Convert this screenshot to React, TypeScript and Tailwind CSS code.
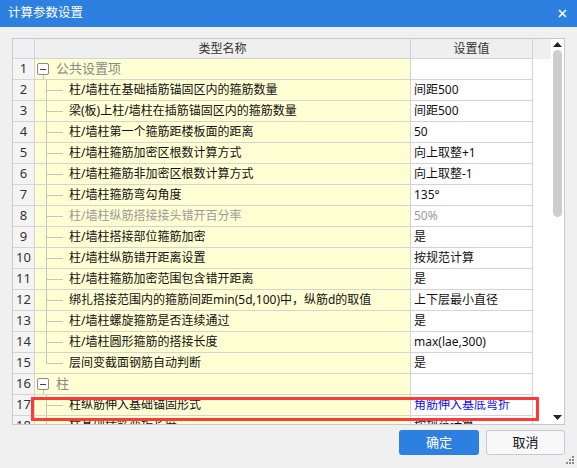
import React from "react"

type Row = {
  n: number
  name: string
  value?: string
  group?: boolean
  last?: boolean
  disabled?: boolean
  blue?: boolean
}

const rows: Row[] = [
  { n: 1, name: "公共设置项", group: true },
  { n: 2, name: "柱/墙柱在基础插筋锚固区内的箍筋数量", value: "间距500" },
  { n: 3, name: "梁(板)上柱/墙柱在插筋锚固区内的箍筋数量", value: "间距500" },
  { n: 4, name: "柱/墙柱第一个箍筋距楼板面的距离", value: "50" },
  { n: 5, name: "柱/墙柱箍筋加密区根数计算方式", value: "向上取整+1" },
  { n: 6, name: "柱/墙柱箍筋非加密区根数计算方式", value: "向上取整-1" },
  { n: 7, name: "柱/墙柱箍筋弯勾角度", value: "135°" },
  { n: 8, name: "柱/墙柱纵筋搭接接头错开百分率", value: "50%", disabled: true },
  { n: 9, name: "柱/墙柱搭接部位箍筋加密", value: "是" },
  { n: 10, name: "柱/墙柱纵筋错开距离设置", value: "按规范计算" },
  { n: 11, name: "柱/墙柱箍筋加密范围包含错开距离", value: "是" },
  { n: 12, name: "绑扎搭接范围内的箍筋间距min(5d,100)中，纵筋d的取值", value: "上下层最小直径" },
  { n: 13, name: "柱/墙柱螺旋箍筋是否连续通过", value: "是" },
  { n: 14, name: "柱/墙柱圆形箍筋的搭接长度", value: "max(lae,300)" },
  { n: 15, name: "层间变截面钢筋自动判断", value: "是", last: true },
  { n: 16, name: "柱", group: true },
  { n: 17, name: "柱纵筋伸入基础锚固形式", value: "角筋伸入基底弯折", blue: true },
  { n: 18, name: "柱基础插筋弯折长度", value: "按规范计算" },
]

const font = { fontFamily: '"Noto Sans", "Noto Sans CJK SC", sans-serif' }

function TreeLines({ last }: { last?: boolean }) {
  return (
    <svg width="32" height="20" className="shrink-0">
      <line x1="9.5" y1="0" x2="9.5" y2={last ? 10.5 : 20} stroke="#c4c4c4" />
      <line x1="9.5" y1="10.5" x2="26" y2="10.5" stroke="#c4c4c4" />
    </svg>
  )
}

function GroupBox() {
  return (
    <div className="relative h-full w-[12px] shrink-0">
      <div className="absolute top-[4px] left-0 flex h-[12px] w-[12px] items-center justify-center rounded-[2px] border border-[#8a8a8a] bg-white">
        <div className="h-[1px] w-[6px] bg-[#444]" />
      </div>
      <div className="absolute top-[16px] left-[6px] h-[4px] w-[1px] bg-[#c4c4c4]" />
    </div>
  )
}

export default function App() {
  return (
    <div className="relative flex h-[468px] w-[577px] flex-col overflow-hidden bg-[#f0f0f0]" style={font}>
      {/* title bar */}
      <div className="flex h-[27px] shrink-0 items-center justify-between bg-[#2d7fe0] pr-[10px] pl-[8px]">
        <span className="text-[12.5px] text-white">计算参数设置</span>
        <svg width="9" height="9" viewBox="0 0 9 9">
          <path d="M1 1L8 8M8 1L1 8" stroke="white" strokeWidth="1.6" />
        </svg>
      </div>

      {/* grid */}
      <div className="mt-[11px] ml-[12px] flex h-[387px] w-[553px] border border-[#c9c9c9] bg-white">
        <div className="flex w-[538px] flex-col overflow-hidden">
          {/* header */}
          <div className="flex h-[20px] shrink-0 bg-[#efefef] text-[12px] text-[#333]">
            <div className="w-[22px] shrink-0 border-r border-b border-[#d4d4d4] bg-[#eef0f3]" />
            <div className="flex w-[376px] shrink-0 items-center justify-center border-r border-b border-[#d4d4d4]">
              类型名称
            </div>
            <div className="flex w-[122px] shrink-0 items-center justify-center border-r border-b border-[#d4d4d4]">
              设置值
            </div>
            <div className="flex-1" />
          </div>
          {/* rows */}
          {rows.map((r) => (
            <div key={r.n} className="flex h-[21px] shrink-0">
              <div className="flex w-[22px] shrink-0 items-center justify-center border-r border-b border-[#d4d4d4] bg-[#f4f4f4] text-[13px] text-[#333]">
                {r.n}
              </div>
              <div className="flex w-[376px] shrink-0 items-center overflow-hidden border-r border-b border-[#d4d4d4] bg-[#ffffd4] pl-[2px] text-[12px] whitespace-nowrap">
                {r.group ? (
                  <>
                    <GroupBox />
                    <span className="ml-[7px] text-[13px] text-[#8a8a8a]">{r.name}</span>
                  </>
                ) : (
                  <>
                    <TreeLines last={r.last} />
                    <span className={r.disabled ? "text-[#9a9a9a]" : "text-[#111]"}>{r.name}</span>
                  </>
                )}
              </div>
              <div
                className={`flex w-[122px] shrink-0 items-center overflow-hidden border-r border-b border-[#d4d4d4] pl-[3px] text-[12px] whitespace-nowrap ${
                  r.blue ? "text-[#0a0aff]" : r.disabled ? "text-[#9a9a9a]" : "text-[#111]"
                }`}
              >
                {r.value}
              </div>
            </div>
          ))}
        </div>

        {/* scrollbar */}
        <div className="flex w-[13px] flex-col items-center pt-[2px] pb-[4px]">
          <svg width="9" height="5" className="mt-[1px]">
            <path d="M0 5L4.5 0L9 5Z" fill="#222" />
          </svg>
          <div className="mt-[3px] h-[167px] w-[9px] rounded-full bg-[#cdcdcd]" />
          <div className="flex-1" />
          <svg width="9" height="5">
            <path d="M0 0L4.5 5L9 0Z" fill="#222" />
          </svg>
        </div>
      </div>

      {/* buttons */}
      <div className="mt-[5px] mr-[12px] flex justify-end gap-[7px]">
        <button className="h-[25px] w-[80px] rounded-[3px] bg-[#2d7fe0] text-[13px] text-white">确定</button>
        <button className="h-[25px] w-[79px] rounded-[3px] border border-[#c6c9cf] bg-[#f8f8f8] text-[13px] text-[#111]">
          取消
        </button>
      </div>

      {/* resize grip */}
      <svg width="9" height="9" className="absolute right-[3px] bottom-[4px]">
        <rect x="7" y="1" width="2" height="2" fill="#8a8a8a" />
        <rect x="4" y="4" width="2" height="2" fill="#8a8a8a" />
        <rect x="7" y="4" width="2" height="2" fill="#8a8a8a" />
        <rect x="1" y="7" width="2" height="2" fill="#8a8a8a" />
        <rect x="4" y="7" width="2" height="2" fill="#8a8a8a" />
        <rect x="7" y="7" width="2" height="2" fill="#8a8a8a" />
      </svg>

      {/* annotation highlight */}
      <div className="absolute top-[397px] left-[31px] h-[24px] w-[508px] border-[3px] border-[#fb3a3a]" />
    </div>
  )
}
